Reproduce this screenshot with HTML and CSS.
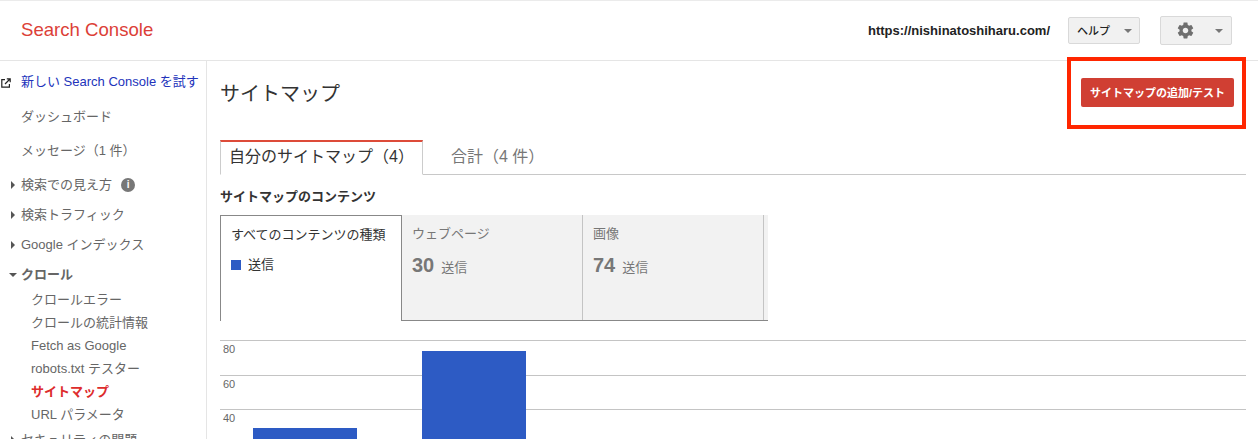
FILE: index.html
```html
<!DOCTYPE html>
<html lang="ja">
<head>
<meta charset="utf-8">
<title>サイトマップ - Search Console</title>
<link rel="stylesheet" href="styles.css">
</head>
<body>
<div class="page">
  <header class="topbar">
    <div class="logo">Search Console</div>
    <div class="top-right">
      <span class="site">https://nishinatoshiharu.com/</span>
      <button class="btn help"><span>ヘルプ</span><i class="caret"></i></button>
      <button class="btn gear">
        <svg width="19" height="19" viewBox="0 0 24 24"><path fill="#6f6f6f" d="M19.43 12.98c.04-.32.07-.64.07-.98s-.03-.66-.07-.98l2.11-1.65c.19-.15.24-.42.12-.64l-2-3.46c-.12-.22-.39-.3-.61-.22l-2.49 1c-.52-.4-1.08-.73-1.69-.98l-.38-2.65C14.46 2.18 14.25 2 14 2h-4c-.25 0-.46.18-.49.42l-.38 2.65c-.61.25-1.17.59-1.69.98l-2.49-1c-.23-.09-.49 0-.61.22l-2 3.46c-.13.22-.07.49.12.64l2.11 1.65c-.04.32-.07.65-.07.98s.03.66.07.98l-2.11 1.65c-.19.15-.24.42-.12.64l2 3.46c.12.22.39.3.61.22l2.49-1c.52.4 1.08.73 1.69.98l.38 2.65c.03.24.24.42.49.42h4c.25 0 .46-.18.49-.42l.38-2.65c.61-.25 1.17-.59 1.69-.98l2.49 1c.23.09.49 0 .61-.22l2-3.46c.12-.22.07-.49-.12-.64l-2.11-1.65zM12 15.5c-1.93 0-3.5-1.57-3.5-3.5s1.57-3.5 3.5-3.5 3.5 1.57 3.5 3.5-1.57 3.5-3.5 3.5z"/></svg>
        <i class="caret"></i>
      </button>
    </div>
  </header>
  <div class="body">
    <nav class="side">
      <a class="nav try">
        <svg class="ext" width="10" height="10" viewBox="0 0 10 10"><path fill="none" stroke="#222" stroke-width="1.2" d="M4 1.6H.8v7.6h7.6V6M4 6l5-5M5.8.8h3.4v3.4"/></svg>
        新しい Search Console を試す</a>
      <a class="nav dash">ダッシュボード</a>
      <a class="nav msg">メッセージ（1 件）</a>
      <a class="nav sec first"><i class="tri"></i>検索での見え方<span class="info">i</span></a>
      <a class="nav sec"><i class="tri"></i>検索トラフィック</a>
      <a class="nav sec"><i class="tri"></i>Google インデックス</a>
      <a class="nav sec open"><i class="tri-down"></i>クロール</a>
      <a class="nav sub">クロールエラー</a>
      <a class="nav sub">クロールの統計情報</a>
      <a class="nav sub">Fetch as Google</a>
      <a class="nav sub">robots.txt テスター</a>
      <a class="nav sub active">サイトマップ</a>
      <a class="nav sub">URL パラメータ</a>
      <a class="nav sec last"><i class="tri"></i>セキュリティの問題</a>
    </nav>
    <main class="main">
      <div class="title-row">
        <h1>サイトマップ</h1>
        <button class="primary">サイトマップの追加/テスト</button>
      </div>
      <div class="tabs">
        <div class="tab current">自分のサイトマップ（4）</div>
        <div class="tab">合計（4 件）</div>
      </div>
      <h2>サイトマップのコンテンツ</h2>
      <div class="cards">
        <div class="card selected">
          <div class="card-title">すべてのコンテンツの種類</div>
          <div class="legend"><i class="swatch"></i>送信</div>
        </div>
        <div class="card">
          <div class="card-title">ウェブページ</div>
          <div class="stat"><b>30</b>送信</div>
        </div>
        <div class="card">
          <div class="card-title">画像</div>
          <div class="stat"><b>74</b>送信</div>
        </div>
      </div>
      <div class="chart">
        <div class="grid-line"><span>80</span></div>
        <div class="grid-line"><span>60</span></div>
        <div class="grid-line"><span>40</span></div>
        <div class="bar bar-a"></div>
        <div class="bar bar-b"></div>
      </div>
    </main>
  </div>
  <div class="callout"></div>
</div>
</body>
</html>
```

FILE: styles.css
```css
* { box-sizing: border-box; }
html, body { margin: 0; padding: 0; background: #fff; }
body { font-family: "Liberation Sans", "Noto Sans CJK JP", sans-serif; font-size: 13px; color: #666; text-spacing-trim: space-all; }
.page { position: relative; width: 1258px; height: 439px; overflow: hidden; border-top: 1px solid #ebebeb; }

.topbar { height: 60px; border-bottom: 1px solid #e5e5e5; display: flex; align-items: center; justify-content: space-between; padding: 0 26px 0 21px; }
.logo { color: #dc3f38; font-size: 18.6px; line-height: 24px; margin-top: -2px; }
.top-right { display: flex; align-items: center; }
.site { color: #222; font-weight: bold; font-size: 13px; margin-right: 18px; }
.btn { display: flex; align-items: center; justify-content: space-between; height: 27px; background: #f1f1f1; border: 1px solid #d9d9d9; border-radius: 2px; padding: 0; font-family: inherit; color: #222; font-size: 11px; }
.help { width: 72px; padding: 0 7px 2px 8px; margin-right: 20px; font-weight: 500; }
.gear { width: 72px; height: 29px; padding: 0 8px 0 15px; }
.caret { display: block; width: 0; height: 0; border: 4px solid transparent; border-top-color: #777; border-bottom: 0; }
.help .caret { margin-top: 2px; }

.body { display: flex; height: 378px; }
.side { width: 207px; flex: none; border-right: 1px solid #e5e5e5; position: relative; padding-top: 11px; }
.nav { display: block; position: relative; padding-left: 21px; white-space: nowrap; line-height: 20px; height: 20px; }
.try { color: #2233bb; margin-bottom: 15px; font-size: 13px; }
.ext { position: absolute; left: 1px; top: 6px; }
.dash { margin-bottom: 14px; }
.msg { margin-bottom: 14px; }
.sec { margin-bottom: 10px; }
.sec.open { font-weight: bold; margin-bottom: 5px; }
.sub { padding-left: 31px; margin-bottom: 3px; font-size: 13px; }
.sub.active { color: #dd2c2c; font-weight: bold; }
.sec.last { margin-top: 5px; }
.tri { position: absolute; left: 11px; top: 6px; width: 0; height: 0; border: 4px solid transparent; border-left: 4px solid #555; border-right: 0; }
.tri-down { position: absolute; left: 9px; top: 8px; width: 0; height: 0; border: 4px solid transparent; border-top: 4px solid #555; border-bottom: 0; }
.info { display: inline-block; width: 14px; height: 14px; border-radius: 50%; background: #777; color: #fff; font-size: 10px; line-height: 14px; text-align: center; font-weight: bold; margin-left: 9px; vertical-align: 1px; }

.main { flex: 1; padding: 0 12px 0 13px; min-width: 0; }
.title-row { display: flex; justify-content: space-between; height: 79px; padding-top: 17px; padding-right: 12px; }
h1 { margin: 2px 0 0; font-size: 20px; font-weight: normal; color: #333; line-height: 28px; }
.primary { width: 153px; height: 29px; border: 0; border-radius: 2px; background: #d03f33; color: #fff; font-family: inherit; font-size: 11px; font-weight: bold; padding: 0 0 2px; }
.tabs { display: flex; height: 35px; border-bottom: 1px solid #c8c8c8; }
.tab { height: 35px; line-height: 34px; font-size: 16px; padding: 0 9px; color: #777; white-space: nowrap; }
.tab.current { width: 203px; padding: 0 8px 0 9px; line-height: 30px; color: #333; background: #fff; border-top: 2px solid #dd4b39; border-left: 1px solid #ccc; border-right: 1px solid #ccc; border-bottom: 1px solid #fff; text-indent: -1px; }
.tab:not(.current) { padding-left: 28px; }
h2 { margin: 13px 0 9px; font-size: 13px; line-height: 18px; color: #333; font-weight: bold; }
.cards { display: flex; width: 548px; height: 106px; border-bottom: 1px solid #888; background: #f2f2f2; }
.card { width: 181px; background: #f2f2f2; border-right: 1px solid #c4c4c4; padding: 10px 10px 0; height: 105px; }
.card.selected { width: 182px; background: #fff; border: 1px solid #888; border-bottom: 0; height: 106px; margin-bottom: -1px; padding: 10px 10px 0; position: relative; color: #333; }
.card-title { font-size: 13px; line-height: 18px; color: #777; white-space: nowrap; }
.selected .card-title { color: #333; }
.legend { margin-top: 12px; display: flex; align-items: center; line-height: 18px; color: #333; }
.swatch { width: 10px; height: 10px; background: #2d5bc4; margin-right: 7px; }
.stat { margin-top: 10px; color: #777; font-size: 13px; display: flex; align-items: baseline; line-height: 24px; }
.stat b { font-size: 20px; margin-right: 7px; }

.chart { position: relative; margin-top: 19px; height: 120px; width: 1026px; }
.grid-line { height: 35px; border-top: 1px solid #c4c4c4; position: relative; }
.grid-line:nth-child(2) { height: 34px; }
.grid-line span { position: absolute; left: 3px; top: 1px; font-size: 11px; line-height: 14px; color: #666; }
.bar { position: absolute; width: 104px; background: #2d5bc4; bottom: 0; }
.bar-a { left: 33px; top: 88px; }
.bar-b { left: 202px; top: 11px; }

.callout { position: absolute; left: 1067px; top: 56px; width: 179px; height: 72px; border: 4px solid #ff2600; }
```
